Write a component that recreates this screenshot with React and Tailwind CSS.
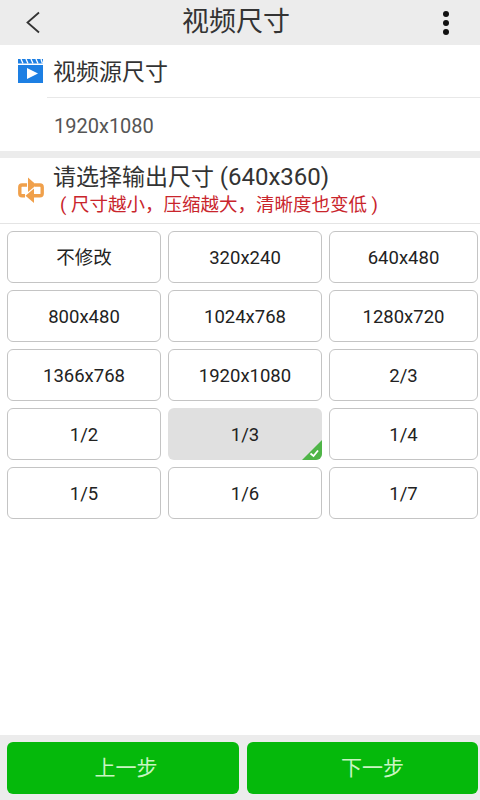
import React from 'react';

const FONT = "font-['Roboto','Noto_Sans_CJK_SC',sans-serif]";

const sizes = [
  '不修改', '320x240', '640x480',
  '800x480', '1024x768', '1280x720',
  '1366x768', '1920x1080', '2/3',
  '1/2', '1/3', '1/4',
  '1/5', '1/6', '1/7',
];

const VideoIcon = () => (
  <svg width="25" height="24" viewBox="0 0 25 24" className="shrink-0">
    <rect x="0" y="0" width="25" height="4.5" fill="#1d7fe3" />
    <path d="M3 0l2 4.5M8 0l2 4.5M13 0l2 4.5M18 0l2 4.5M23 0l1.5 4.5" stroke="#fff" strokeWidth="1.3" fill="none" />
    <rect x="0" y="6" width="25" height="18" fill="#1d7fe3" />
    <path d="M9 9L20 14.5L9 20Z" fill="#fff" />
  </svg>
);

const ConvertIcon = () => (
  <svg width="26" height="26" viewBox="0 0 26 26" fill="none" className="shrink-0">
    <path d="M9 8H4Q1.8 8 1.8 10.2V16.5Q1.8 18.7 4 18.7H7" stroke="#f0a04b" strokeWidth="3.4" />
    <path d="M17 8H22Q24.2 8 24.2 10.2V16.5Q24.2 18.7 22 18.7H15" stroke="#f0a04b" strokeWidth="3.4" />
    <path d="M10 0.5L18.5 8L10 15Z" fill="#f0a04b" />
    <path d="M16 11.5L7.5 18.7L16 26Z" fill="#f0a04b" />
  </svg>
);

const App = () => {
  return (
    <div className={`w-[480px] h-[800px] flex flex-col bg-white overflow-hidden ${FONT}`}>
      <div className="h-[45px] shrink-0 bg-[#ececec] flex items-center justify-between pl-[25px] pr-[31px]">
        <svg width="16" height="24" viewBox="0 0 16 24" fill="none">
          <path d="M14 1.5L2.5 11.5L14 21.5" stroke="#333" strokeWidth="1.8" />
        </svg>
        <div className="text-[27px] leading-none text-[#333] mr-[12px]">视频尺寸</div>
        <div className="flex flex-col gap-[3px]">
          <span className="w-[6px] h-[6px] rounded-full bg-[#111]" />
          <span className="w-[6px] h-[6px] rounded-full bg-[#111]" />
          <span className="w-[6px] h-[6px] rounded-full bg-[#111]" />
        </div>
      </div>

      <div className="h-[53px] shrink-0 flex">
        <div className="w-[47px] shrink-0 pl-[18px] pt-[14px]">
          <VideoIcon />
        </div>
        <div className="flex-1 border-b border-[#e8e8e8] pl-[6px] pt-[11px] text-[23px] leading-[34px] text-[#333]">
          视频源尺寸
        </div>
      </div>
      <div className="h-[53px] shrink-0 flex items-center pl-[54px] pt-[2px] text-[20px] text-[#555]">1920x1080</div>
      <div className="h-[7px] shrink-0 bg-[#ececec]" />

      <div className="h-[66px] shrink-0 flex border-b border-[#e4e4e4]">
        <div className="w-[53px] shrink-0 pl-[18px] pt-[19px]">
          <ConvertIcon />
        </div>
        <div className="flex flex-col">
          <div className="text-[23px] leading-[30px] mt-[4px] text-[#333] whitespace-nowrap">
            请选择输出尺寸 <span className="text-[24px]">(640x360)</span>
          </div>
          <div className="text-[18.5px] leading-[24px] ml-[7px] text-[#c9252c] whitespace-nowrap">( 尺寸越小，压缩越大，清晰度也变低 )</div>
        </div>
      </div>

      <div className="grid grid-cols-[154px_154px_149px] gap-x-[7px] gap-y-[7px] pl-[7px] pt-[7px]">
        {sizes.map((size) => (
          <div
            key={size}
            className={`relative h-[52px] rounded-[6px] flex items-center justify-center pt-[4px] text-[18.5px] text-[#222] overflow-hidden ${
              size === '1/3' ? 'bg-[#e0e0e0]' : 'bg-white border border-[#c4c4c4]'
            }`}
          >
            {size}
            {size === '1/3' && (
              <svg width="20" height="20" viewBox="0 0 20 20" className="absolute right-0 bottom-0">
                <path d="M20 0V20H0Z" fill="#4fb548" />
                <path d="M8.5 13.5L11.5 16L16 10.5" stroke="#fff" strokeWidth="1.8" fill="none" />
              </svg>
            )}
          </div>
        ))}
      </div>

      <div className="mt-auto h-[65px] shrink-0 bg-[#ececec] flex gap-[8px] pl-[7px] pt-[7px]">
        <div className="w-[232px] h-[52px] rounded-[6px] bg-[#05b90b] flex items-center justify-center pl-[6px] pt-[2px] text-[21px] text-[#c9f5c2]">上一步</div>
        <div className="w-[231px] h-[52px] rounded-[6px] bg-[#05b90b] flex items-center justify-center pl-[20px] pt-[2px] text-[21px] text-[#c9f5c2]">下一步</div>
      </div>
    </div>
  );
};

export default App;
